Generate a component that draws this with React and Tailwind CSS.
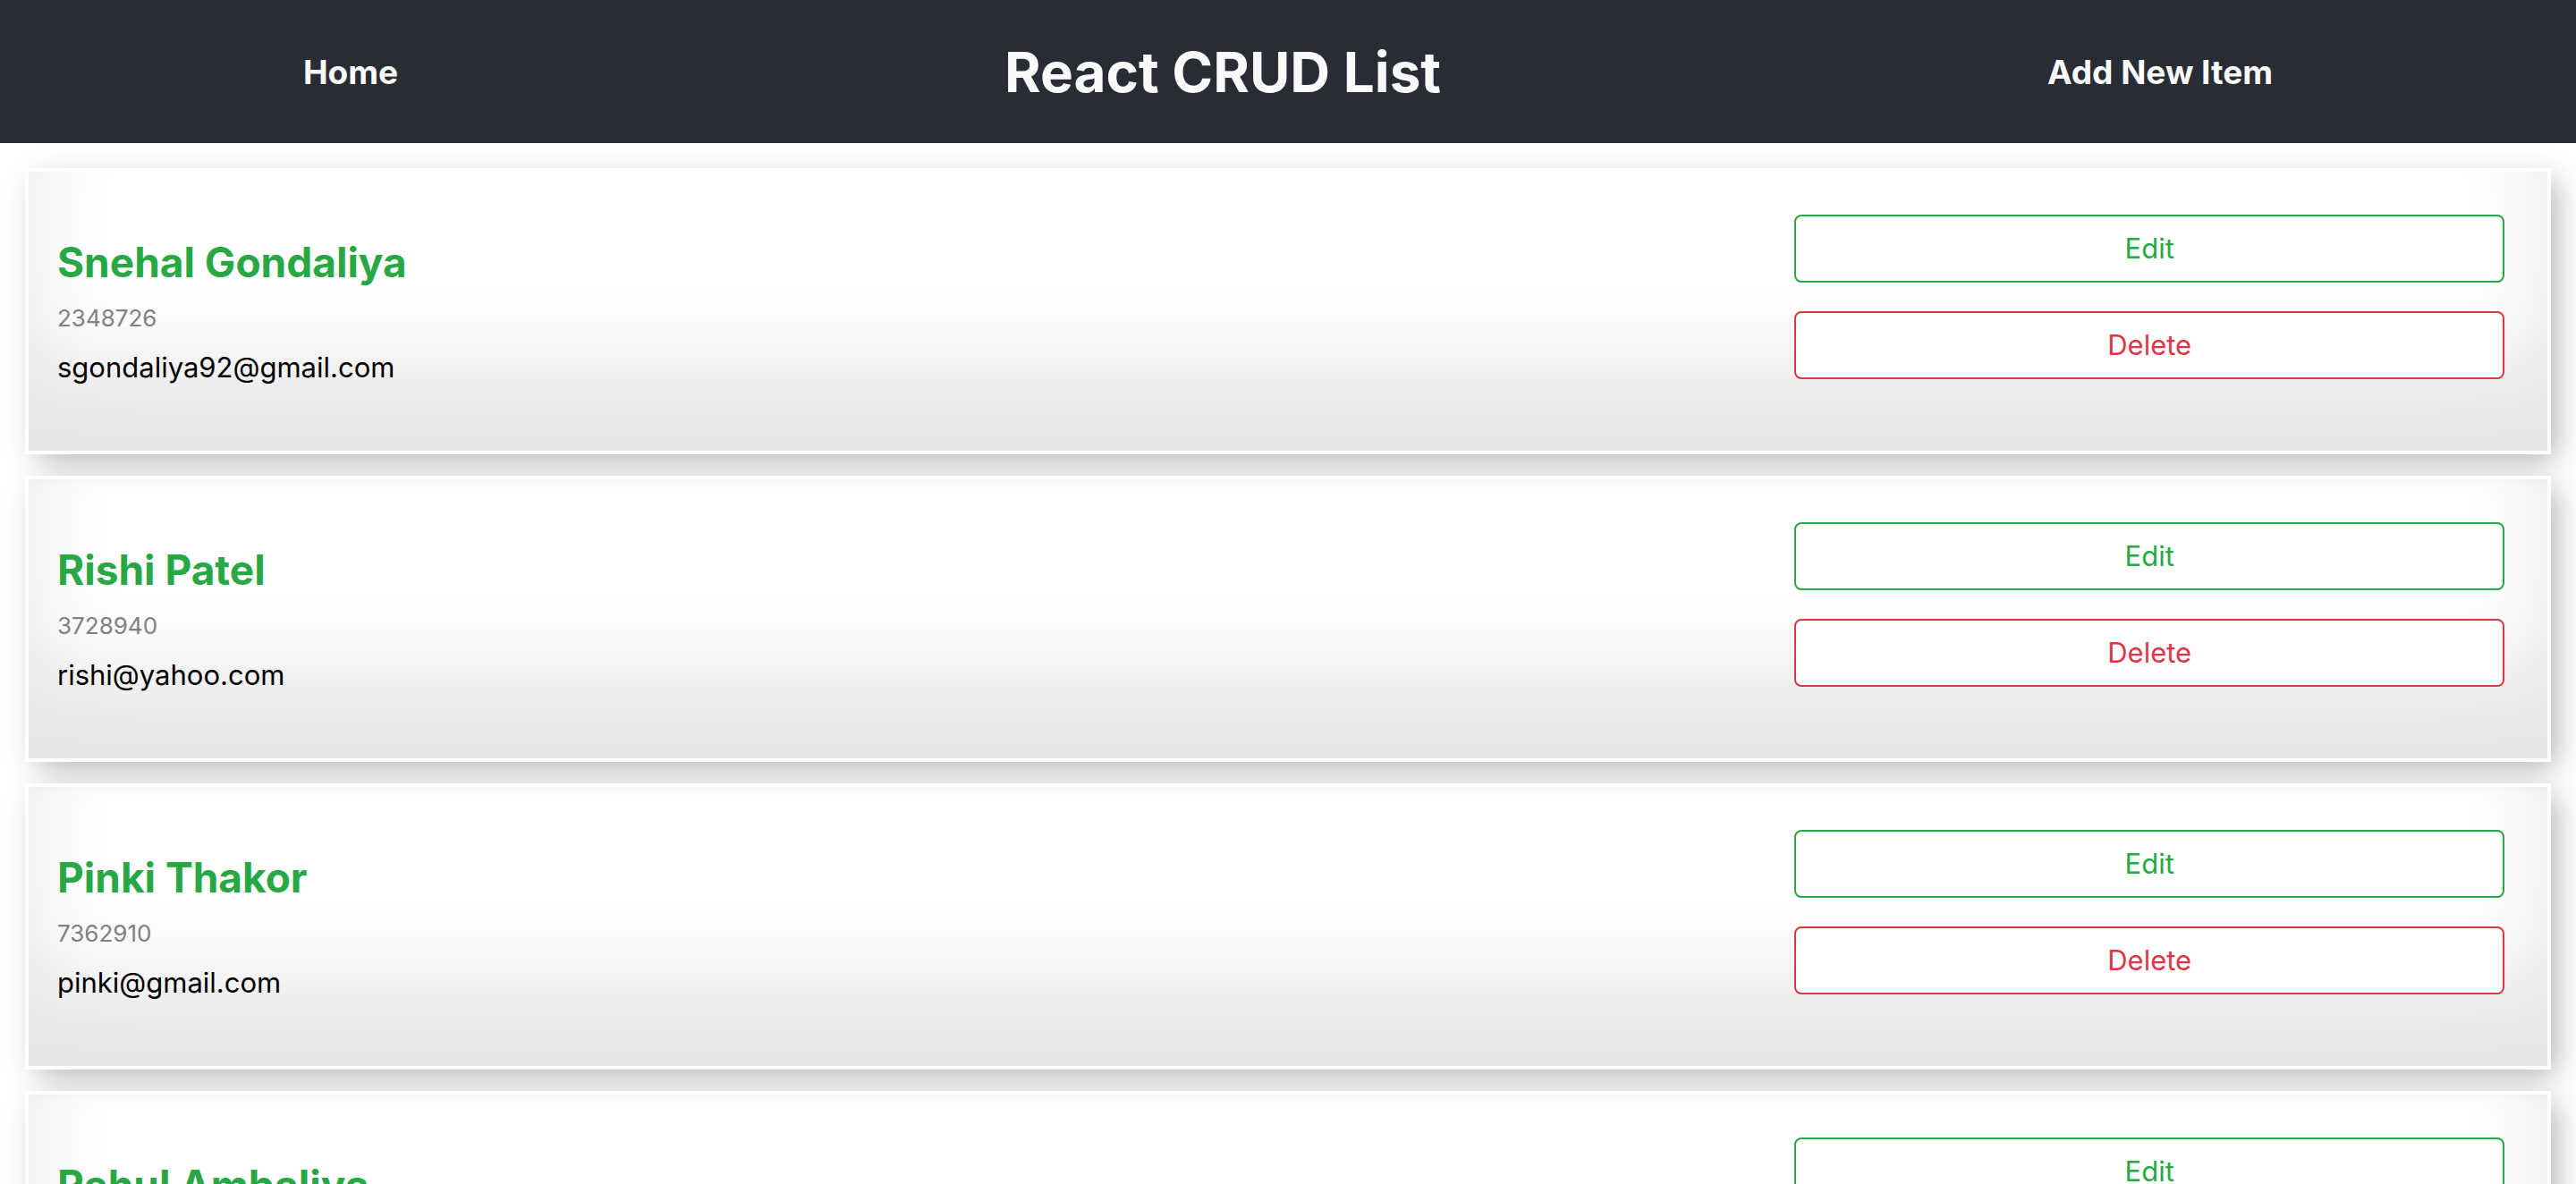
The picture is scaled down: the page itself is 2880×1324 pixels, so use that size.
const items = [
  { name: "Snehal Gondaliya", id: "2348726", email: "sgondaliya92@gmail.com" },
  { name: "Rishi Patel", id: "3728940", email: "rishi@yahoo.com" },
  { name: "Pinki Thakor", id: "7362910", email: "pinki@gmail.com" },
  { name: "Rahul Ambaliya", id: "8273645", email: "rahul@gmail.com" },
];

function Header() {
  return (
    <header className="flex h-40 items-center justify-around bg-[#282c34] pt-0.5 font-bold text-[#fafafa]">
      <a href="#home" className="text-[37px] leading-[44px]">Home</a>
      <h1 className="text-[62px] leading-[76px]">React CRUD List</h1>
      <a href="#add" className="text-[37px] leading-[44px]">Add New Item</a>
    </header>
  );
}

function Card({ item }) {
  return (
    <li className="flex justify-between p-8 shadow-[inset_0_-96px_96px_rgba(0,0,0,0.1),0_0_0_4px_#fff,10px_10px_32px_rgba(0,0,0,0.3)]">
      <div className="flex flex-col gap-3.5 py-10">
        <h2 className="text-[46px] leading-[58px] font-bold text-[#28a745]">{item.name}</h2>
        <p className="text-[26px] leading-[40px] text-[#808080]">{item.id}</p>
        <p className="text-[31px] leading-[42px] text-black">{item.email}</p>
      </div>
      <div className="flex w-[30%] flex-col gap-8 p-4">
        <button type="button" className="h-[76px] rounded-lg border-2 border-[#28a745] bg-white text-[31px] text-[#28a745]">
          Edit
        </button>
        <button type="button" className="h-[76px] rounded-lg border-2 border-[#dc3545] bg-white text-[31px] text-[#dc3545]">
          Delete
        </button>
      </div>
    </li>
  );
}

export default function App() {
  return (
    <div className="h-screen overflow-hidden bg-white font-['Inter',sans-serif]">
      <Header />
      <ul className="flex flex-col gap-8 p-8">
        {items.map((item) => (
          <Card key={item.id} item={item} />
        ))}
      </ul>
    </div>
  );
}
